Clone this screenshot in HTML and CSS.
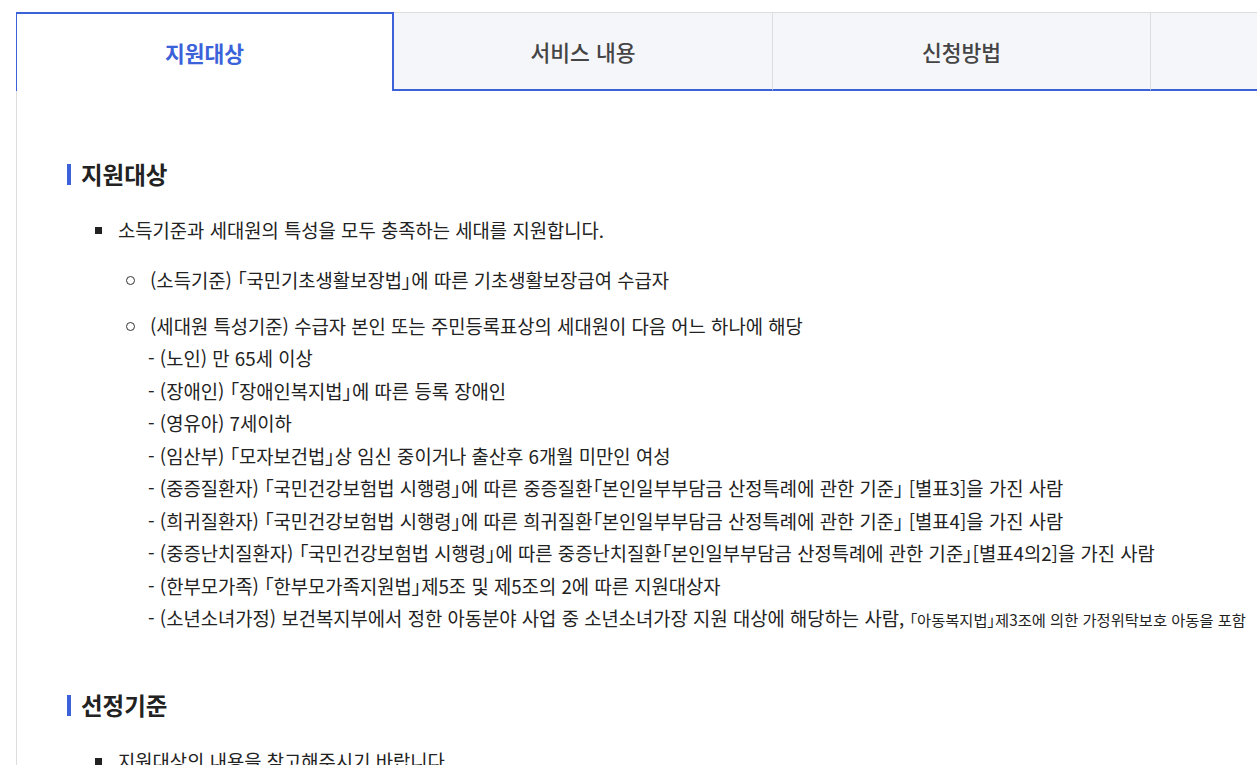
FILE: index.html
```html
<!DOCTYPE html>
<html lang="ko">
<head>
    <meta charset="utf-8">
    <title>지원대상</title>
    <link rel="stylesheet" href="styles.css">
</head>
<body>
    <div class="wrap">
        <ul class="tabs">
            <li class="tab active">지원대상</li>
            <li class="tab">서비스 내용</li>
            <li class="tab">신청방법</li>
            <li class="tab"></li>
        </ul>

        <div class="panel">
            <h3 class="title">지원대상</h3>
            <ul class="list">
                <li>소득기준과 세대원의 특성을 모두 충족하는 세대를 지원합니다.
                    <ul class="sub">
                        <li>(소득기준) 「국민기초생활보장법」에 따른 기초생활보장급여 수급자</li>
                        <li>(세대원 특성기준) 수급자 본인 또는 주민등록표상의 세대원이 다음 어느 하나에 해당
                            <p>- (노인) 만 65세 이상</p>
                            <p>- (장애인) 「장애인복지법」에 따른 등록 장애인</p>
                            <p>- (영유아) 7세이하</p>
                            <p>- (임산부) 「모자보건법」상 임신 중이거나 출산후 6개월 미만인 여성</p>
                            <p>- (중증질환자) 「국민건강보험법 시행령」에 따른 중증질환「본인일부부담금 산정특례에 관한 기준」 [별표3]을 가진 사람</p>
                            <p>- (희귀질환자) 「국민건강보험법 시행령」에 따른 희귀질환「본인일부부담금 산정특례에 관한 기준」 [별표4]을 가진 사람</p>
                            <p>- (중증난치질환자) 「국민건강보험법 시행령」에 따른 중증난치질환「본인일부부담금 산정특례에 관한 기준」[별표4의2]을 가진 사람</p>
                            <p>- (한부모가족) 「한부모가족지원법」제5조 및 제5조의 2에 따른 지원대상자</p>
                            <p>- (소년소녀가정) 보건복지부에서 정한 아동분야 사업 중 소년소녀가장 지원 대상에 해당하는 사람, <small>「아동복지법」제3조에 의한 가정위탁보호 아동을 포함</small></p>
                        </li>
                    </ul>
                </li>
            </ul>

            <h3 class="title">선정기준</h3>
            <ul class="list">
                <li>지원대상의 내용을 참고해주시기 바랍니다.</li>
            </ul>
        </div>
    </div>
</body>
</html>
```

FILE: styles.css
```css
html, body {
    overflow: hidden;
}
body {
    margin: 0;
    padding: 12px 0 0 16px;
    font-family: "Noto Sans CJK KR", "Noto Sans", sans-serif;
    font-feature-settings: "palt";
    color: #222;
    background: #fff;
}
.wrap {
    width: 1512px;
}
.tabs {
    display: flex;
    list-style: none;
    margin: 0;
    padding: 0;
}
.tab {
    flex: 0 0 378px;
    box-sizing: border-box;
    height: 79px;
    display: flex;
    align-items: center;
    justify-content: center;
    background: #f5f6fa;
    border-top: 1px solid #ddd;
    border-left: 1px solid #ddd;
    border-bottom: 2px solid #3b62d9;
    font-size: 21.5px;
    font-weight: 500;
    color: #444;
}
.tab.active {
    background: #fff;
    color: #3b62d9;
    font-weight: 700;
    border: 2px solid #3b62d9;
    border-left-width: 1px;
    border-bottom: none;
}
.tab.active + .tab {
    border-left: none;
}
.panel {
    border-left: 1px solid #ddd;
    padding: 57px 0 40px 50px;
}
.title {
    position: relative;
    margin: 10px 0 0;
    padding-left: 14px;
    font-size: 23.5px;
    font-weight: 700;
    line-height: 32px;
}
.title::before {
    content: "";
    position: absolute;
    left: 0;
    top: 6px;
    width: 4px;
    height: 21px;
    background: #3b62d9;
}
.list {
    list-style: none;
    margin: 24px 0 0;
    padding: 0 0 0 51px;
    font-size: 18.8px;
    line-height: 32px;
}
.list > li {
    position: relative;
}
.list > li::before {
    content: "";
    position: absolute;
    left: -23px;
    top: 13px;
    width: 7px;
    height: 7px;
    background: #222;
}
.sub {
    list-style: none;
    margin: 18px 0 0;
    padding: 0 0 0 32px;
}
.sub > li {
    position: relative;
    margin-bottom: 14px;
}
.sub > li::before {
    content: "";
    position: absolute;
    left: -24px;
    top: 12px;
    width: 7px;
    height: 7px;
    border: 1px solid #333;
    border-radius: 50%;
}
.sub p {
    margin: 0;
    margin-left: -2px;
    line-height: 32.5px;
}
.sub small {
    font-size: 15.3px;
}
.panel .title + .list + .title {
    margin-top: 53px;
}
```
